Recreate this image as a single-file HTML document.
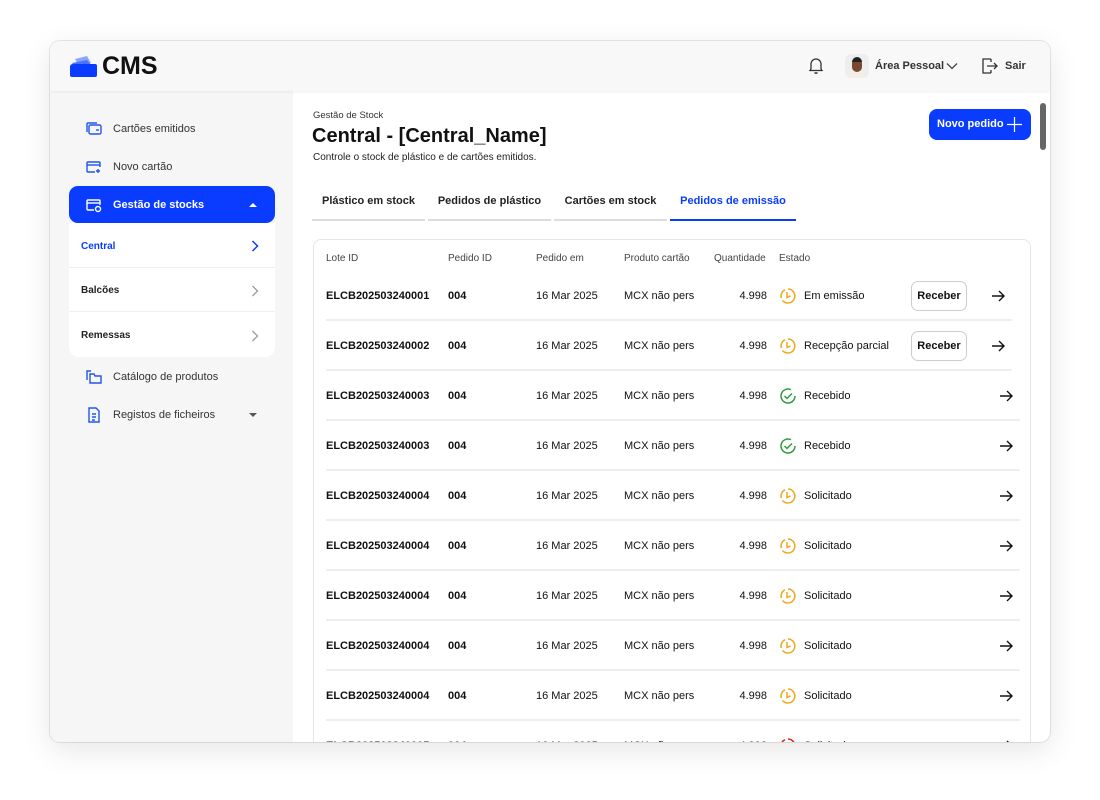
<!DOCTYPE html>
<html><head><meta charset="utf-8"><style>
*{box-sizing:border-box;margin:0;padding:0}
body{width:1100px;height:800px;background:#fff;font-family:"Liberation Sans",sans-serif;color:#111;position:relative;overflow:hidden}
.win{position:absolute;left:50px;top:41px;width:1000px;height:701px;border-radius:10px;background:#fff;overflow:hidden;box-shadow:0 8px 30px rgba(0,0,0,.10),0 0 0 1px #e8e8e8}
.hdr{position:absolute;left:0;top:0;width:1000px;height:50px;background:#f8f8f8;box-shadow:0 1px 3px rgba(0,0,0,.06);z-index:3}
.side{position:absolute;left:0;top:50px;width:243px;height:651px;background:#f6f6f6}
.abs{position:absolute}
.nav{position:absolute;left:35px;font-size:11px;color:#333;display:flex;align-items:center}
.nav svg{margin-right:10px}
.sub{position:absolute;left:19px;top:132px;width:206px;height:134px;background:#fff;border-radius:0 0 10px 10px}
.sub div{height:44.5px;border-bottom:1px solid #f0f0f0;font-size:10px;font-weight:bold;display:flex;align-items:center;justify-content:space-between;padding:3px 16px 0 12px;color:#222}
.sub div:last-child{border:none}
.tab{position:absolute;top:153px;font-size:11px;font-weight:bold;color:#222;text-align:center;border-bottom:2px solid #ddd;height:26px}
.card{position:absolute;left:263px;top:198px;width:718px;height:520px;border:1px solid #e6e6e6;border-radius:8px;background:#fff}
.th{position:absolute;top:13px;font-size:10px;color:#444}
.row{position:absolute;left:0;width:718px;height:50px;font-size:11px}
.row span{position:absolute;top:19px}
.sep{position:absolute;left:12px;height:2px;background:#eee}
.btn{position:absolute;left:597px;top:10px;width:56px;height:30px;border:1px solid #ccc;border-radius:7px;font-weight:bold;font-size:11px;text-align:center;line-height:28px;background:#fff}
</style></head><body>
<div class="win">
<div class="hdr">
 <svg class="abs" style="left:18px;top:13px" width="30" height="24" viewBox="0 0 30 24"><path d="M7 5 L19 2 L23 9 L11 12Z" fill="#8aa6ff"/><path d="M4 9 L19 6 L24 12 L9 15Z" fill="#4d74ff"/><path d="M2 13 Q2 10 5 10 L27 10 Q29 10 29 12 L29 21 Q29 23 27 23 L4 23 Q2 23 2 21Z" fill="#0a3cff"/></svg>
 <div class="abs" style="left:52px;top:11px;font-size:25px;font-weight:bold;color:#111">CMS</div>
 <svg class="abs" style="left:758px;top:16px" width="16" height="18" viewBox="0 0 16 18" fill="none" stroke="#333" stroke-width="1.3"><path d="M3 12 L3 7 A5 5 0 0 1 13 7 L13 12 L14 13.5 L2 13.5Z"/><path d="M6.5 15.5 Q8 17 9.5 15.5"/></svg>
 <div class="abs" style="left:795px;top:13px;width:24px;height:24px;border-radius:6px;background:#eee;overflow:hidden"><div style="position:absolute;left:3px;top:17px;width:18px;height:10px;border-radius:8px 8px 0 0;background:#f3efe6"></div><div style="position:absolute;left:7px;top:4px;width:10px;height:14px;border-radius:5px;background:#7a4a30"></div><div style="position:absolute;left:7px;top:3px;width:10px;height:5px;border-radius:5px 5px 0 0;background:#222"></div></div>
 <div class="abs" style="left:825px;top:19px;font-size:11px;font-weight:bold;color:#333">Área Pessoal</div>
 <svg class="abs" style="left:896px;top:21px" width="12" height="8" viewBox="0 0 12 8" fill="none" stroke="#444" stroke-width="1.3"><path d="M1 1.5 L6 6.5 L11 1.5"/></svg>
 <svg class="abs" style="left:931px;top:16px" width="18" height="18" viewBox="0 0 18 18" fill="none" stroke="#333" stroke-width="1.3"><path d="M10 2 L2 2 L2 16 L10 16 M10 2 L10 5 M10 13 L10 16"/><path d="M6 9 L16 9 M13 6 L16 9 L13 12"/></svg>
 <div class="abs" style="left:955px;top:19px;font-size:11px;font-weight:bold;color:#333">Sair</div>
</div>
<div class="side">
 <div class="nav" style="top:30px"><svg width="18" height="16" viewBox="0 0 18 16" fill="none" stroke="#2255ee" stroke-width="1.4"><rect x="4" y="4" width="12" height="9" rx="1.5"/><path d="M2 11 L2 3 Q2 2 3 2 L12 2"/><path d="M11 9 L14 9"/></svg>Cartões emitidos</div>
 <div class="nav" style="top:68px"><svg width="18" height="16" viewBox="0 0 18 16" fill="none" stroke="#2255ee" stroke-width="1.4"><path d="M10 13 L3 13 Q2 13 2 12 L2 4 Q2 3 3 3 L14 3 Q15 3 15 4 L15 8"/><path d="M2 6 L15 6"/><path d="M13 10 L13 14 M11 12 L15 12"/></svg>Novo cartão</div>
 <div class="abs" style="left:19px;top:95px;width:206px;height:37px;background:#0a3cff;border-radius:9px"></div>
 <div class="nav" style="top:106px;color:#fff;font-weight:bold"><svg width="18" height="16" viewBox="0 0 18 16" fill="none" stroke="#fff" stroke-width="1.4"><path d="M9 13 L3 13 Q2 13 2 12 L2 4 Q2 3 3 3 L14 3 Q15 3 15 4 L15 8"/><path d="M2 6 L15 6"/><circle cx="13" cy="12" r="2.5"/></svg>Gestão de stocks</div>
 <svg class="abs" style="left:198px;top:111px" width="10" height="6" viewBox="0 0 10 6"><path d="M1 5 L5 1 L9 5Z" fill="#fff"/></svg>
 <div class="sub"><div style="color:#0a3cff">Central<svg width="8" height="12" viewBox="0 0 8 12" fill="none" stroke="#0a3cff" stroke-width="1.5"><path d="M1.5 1 L6.5 6 L1.5 11"/></svg></div><div>Balcões<svg width="8" height="12" viewBox="0 0 8 12" fill="none" stroke="#999" stroke-width="1.3"><path d="M1.5 1 L6.5 6 L1.5 11"/></svg></div><div>Remessas<svg width="8" height="12" viewBox="0 0 8 12" fill="none" stroke="#999" stroke-width="1.3"><path d="M1.5 1 L6.5 6 L1.5 11"/></svg></div></div>
 <div class="nav" style="top:278px"><svg width="18" height="16" viewBox="0 0 18 16" fill="none" stroke="#2255ee" stroke-width="1.4"><path d="M2 11 L2 2 L6 2"/><path d="M5 5 L5 14 L16 14 L16 7 L10 7 L9 5Z"/></svg>Catálogo de produtos</div>
 <div class="nav" style="top:316px"><svg width="18" height="16" viewBox="0 0 18 16" fill="none" stroke="#2255ee" stroke-width="1.4"><path d="M4 1 L11 1 L14 4 L14 15 L4 15Z"/><path d="M7 7 L11 7 M7 10 L11 10 M7 13 L10 13"/></svg>Registos de ficheiros</div>
 <svg class="abs" style="left:198px;top:321px" width="10" height="6" viewBox="0 0 10 6"><path d="M1 1 L5 5 L9 1Z" fill="#555"/></svg>
</div>
<div class="abs" style="left:263px;top:69px;font-size:9.5px;color:#333">Gestão de Stock</div>
<div class="abs" style="left:262px;top:84px;font-size:20px;font-weight:bold;color:#111">Central - [Central_Name]</div>
<div class="abs" style="left:263px;top:111px;font-size:10px;color:#222">Controle o stock de plástico e de cartões emitidos.</div>
<div class="abs" style="left:879px;top:68px;width:102px;height:31px;background:#0a3cff;border-radius:8px;color:#fff;font-size:11px;font-weight:bold;line-height:31px;padding-left:8px">Novo pedido<svg style="position:absolute;left:77px;top:7px" width="17" height="17" viewBox="0 0 17 17" stroke="#fff" stroke-width="1.2"><path d="M8.5 1 L8.5 16 M1 8.5 L16 8.5"/></svg></div>
<div class="abs" style="left:990px;top:62px;width:6px;height:47px;border-radius:3px;background:#666"></div>
<div class="tab" style="left:262px;width:113px;top:154px">Plástico em stock</div>
<div class="tab" style="left:378px;width:123px;top:154px">Pedidos de plástico</div>
<div class="tab" style="left:504px;width:113px;top:154px">Cartões em stock</div>
<div class="tab" style="left:620px;width:126px;top:154px;color:#0a3cff;border-color:#0a3cff">Pedidos de emissão</div>
<div class="card">
 <div class="th" style="left:12px">Lote ID</div><div class="th" style="left:134px">Pedido ID</div><div class="th" style="left:222px">Pedido em</div><div class="th" style="left:310px">Produto cartão</div><div class="th" style="left:400px">Quantidade</div><div class="th" style="left:465px">Estado</div>
 <div id="rows"></div>
</div>
</div>
<script>
var data=[["ELCB202503240001","Em emissão","y",1],["ELCB202503240002","Recepção parcial","y",1],["ELCB202503240003","Recebido","g",0],["ELCB202503240003","Recebido","g",0],["ELCB202503240004","Solicitado","y",0],["ELCB202503240004","Solicitado","y",0],["ELCB202503240004","Solicitado","y",0],["ELCB202503240004","Solicitado","y",0],["ELCB202503240004","Solicitado","y",0],["ELCB202503240005","Solicitado","r",0]];
var h="";
data.forEach(function(d,i){
 var t=31+i*50;
 var ic=d[2]=="g"?'<svg width="18" height="18" viewBox="0 0 18 18" fill="none" stroke="#2a9d3a" stroke-width="1.5"><path d="M16 9 A7 7 0 1 1 12 2.7"/><path d="M5.5 9 L8 11.5 L13 6.5"/></svg>':'<svg width="18" height="18" viewBox="0 0 18 18" fill="none" stroke="'+(d[2]=="r"?"#d22":"#f0a820")+'" stroke-width="1.5"><path d="M9 2 A7 7 0 1 1 3.5 13.5"/><path d="M2.3 11 A7 7 0 0 1 6 2.7"/><path d="M8 5 L8 10.5 L11.5 9"/></svg>';
 h+='<div class="row" style="top:'+t+'px"><span style="left:12px;font-weight:bold">'+d[0]+'</span><span style="left:134px;font-weight:bold">004</span><span style="left:222px">16 Mar 2025</span><span style="left:310px">MCX não pers</span><span style="left:400px;width:53px;text-align:right">4.998</span><span style="left:465px;top:16px">'+ic+'</span><span style="left:490px">'+d[1]+'</span>'+(d[3]?'<div class="btn">Receber</div>':'')+'<span style="left:'+(d[3]?676:684)+'px;top:17px"><svg width="16" height="16" viewBox="0 0 16 16" fill="none" stroke="#111" stroke-width="1.4"><path d="M2 8 L14 8 M9 3 L14 8 L9 13"/></svg></span></div>';
 if(i<9)h+='<div class="sep" style="top:'+(t+48)+'px;width:'+(i<2?686:694)+'px"></div>';
});
document.getElementById("rows").innerHTML=h;
</script>
</body></html>
